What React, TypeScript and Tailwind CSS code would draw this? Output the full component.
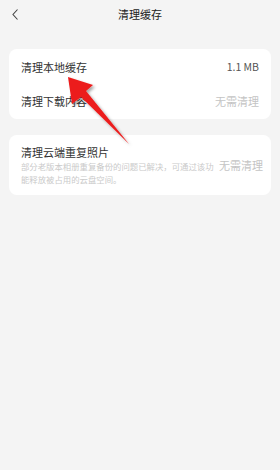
import React from "react";

const FONT = { fontFamily: '"Noto Sans CJK SC", "Noto Sans", sans-serif' };

function Row({ label, value, muted }: { label: string; value: string; muted?: boolean }) {
  return (
    <div className="flex h-[34px] items-center justify-between px-3">
      <span className="text-[11px] text-[#333]">{label}</span>
      <span className={muted ? "text-[11px] text-[#c4c4c4]" : "text-[10.5px] text-[#555]"}>{value}</span>
    </div>
  );
}

export default function App() {
  return (
    <div className="relative h-[470px] w-[280px] overflow-hidden bg-[#f4f4f4]" style={FONT}>
      {/* header */}
      <div className="relative flex h-[29px] items-center justify-center">
        <svg className="absolute left-[11px] top-[8px]" width="9" height="13" viewBox="0 0 9 13">
          <path d="M6.5 1.5 L2 6.5 L6.5 11.5" fill="none" stroke="#444" strokeWidth="1.1" />
        </svg>
        <span className="text-[11px] text-[#222]">清理缓存</span>
      </div>

      <div className="flex flex-col gap-[16px] px-[9px] pt-[20px]">
        <div className="rounded-[8px] bg-white py-[1px]">
          <Row label="清理本地缓存" value="1.1 MB" />
          <Row label="清理下载内容" value="无需清理" muted />
        </div>

        <div className="flex items-center justify-between rounded-[8px] bg-white pb-[9px] pl-3 pr-3 pt-[10px]">
          <div className="flex w-[198px] shrink-0 flex-col">
            <span className="text-[11px] leading-[15px] text-[#333]">清理云端重复照片</span>
            <span className="text-[8.4px] leading-[13px] text-[#cacaca]">
              部分老版本相册重复备份的问题已解决，可通过该功能释放被占用的云盘空间。
            </span>
          </div>
          <span className="whitespace-nowrap text-[11px] text-[#c4c4c4]">无需清理</span>
        </div>
      </div>

      {/* annotation arrow */}
      <svg className="pointer-events-none absolute left-0 top-0" width="280" height="470" viewBox="0 0 280 470">
        <defs>
          <filter id="sh" x="-20%" y="-20%" width="140%" height="140%">
            <feDropShadow dx="2" dy="2" stdDeviation="1.5" floodColor="#000" floodOpacity="0.35" />
          </filter>
        </defs>
        <polygon
          points="68,77 93,85 86,91 129,144 81,97 72,104"
          fill="#ec1c1c"
          filter="url(#sh)"
        />
      </svg>
    </div>
  );
}
